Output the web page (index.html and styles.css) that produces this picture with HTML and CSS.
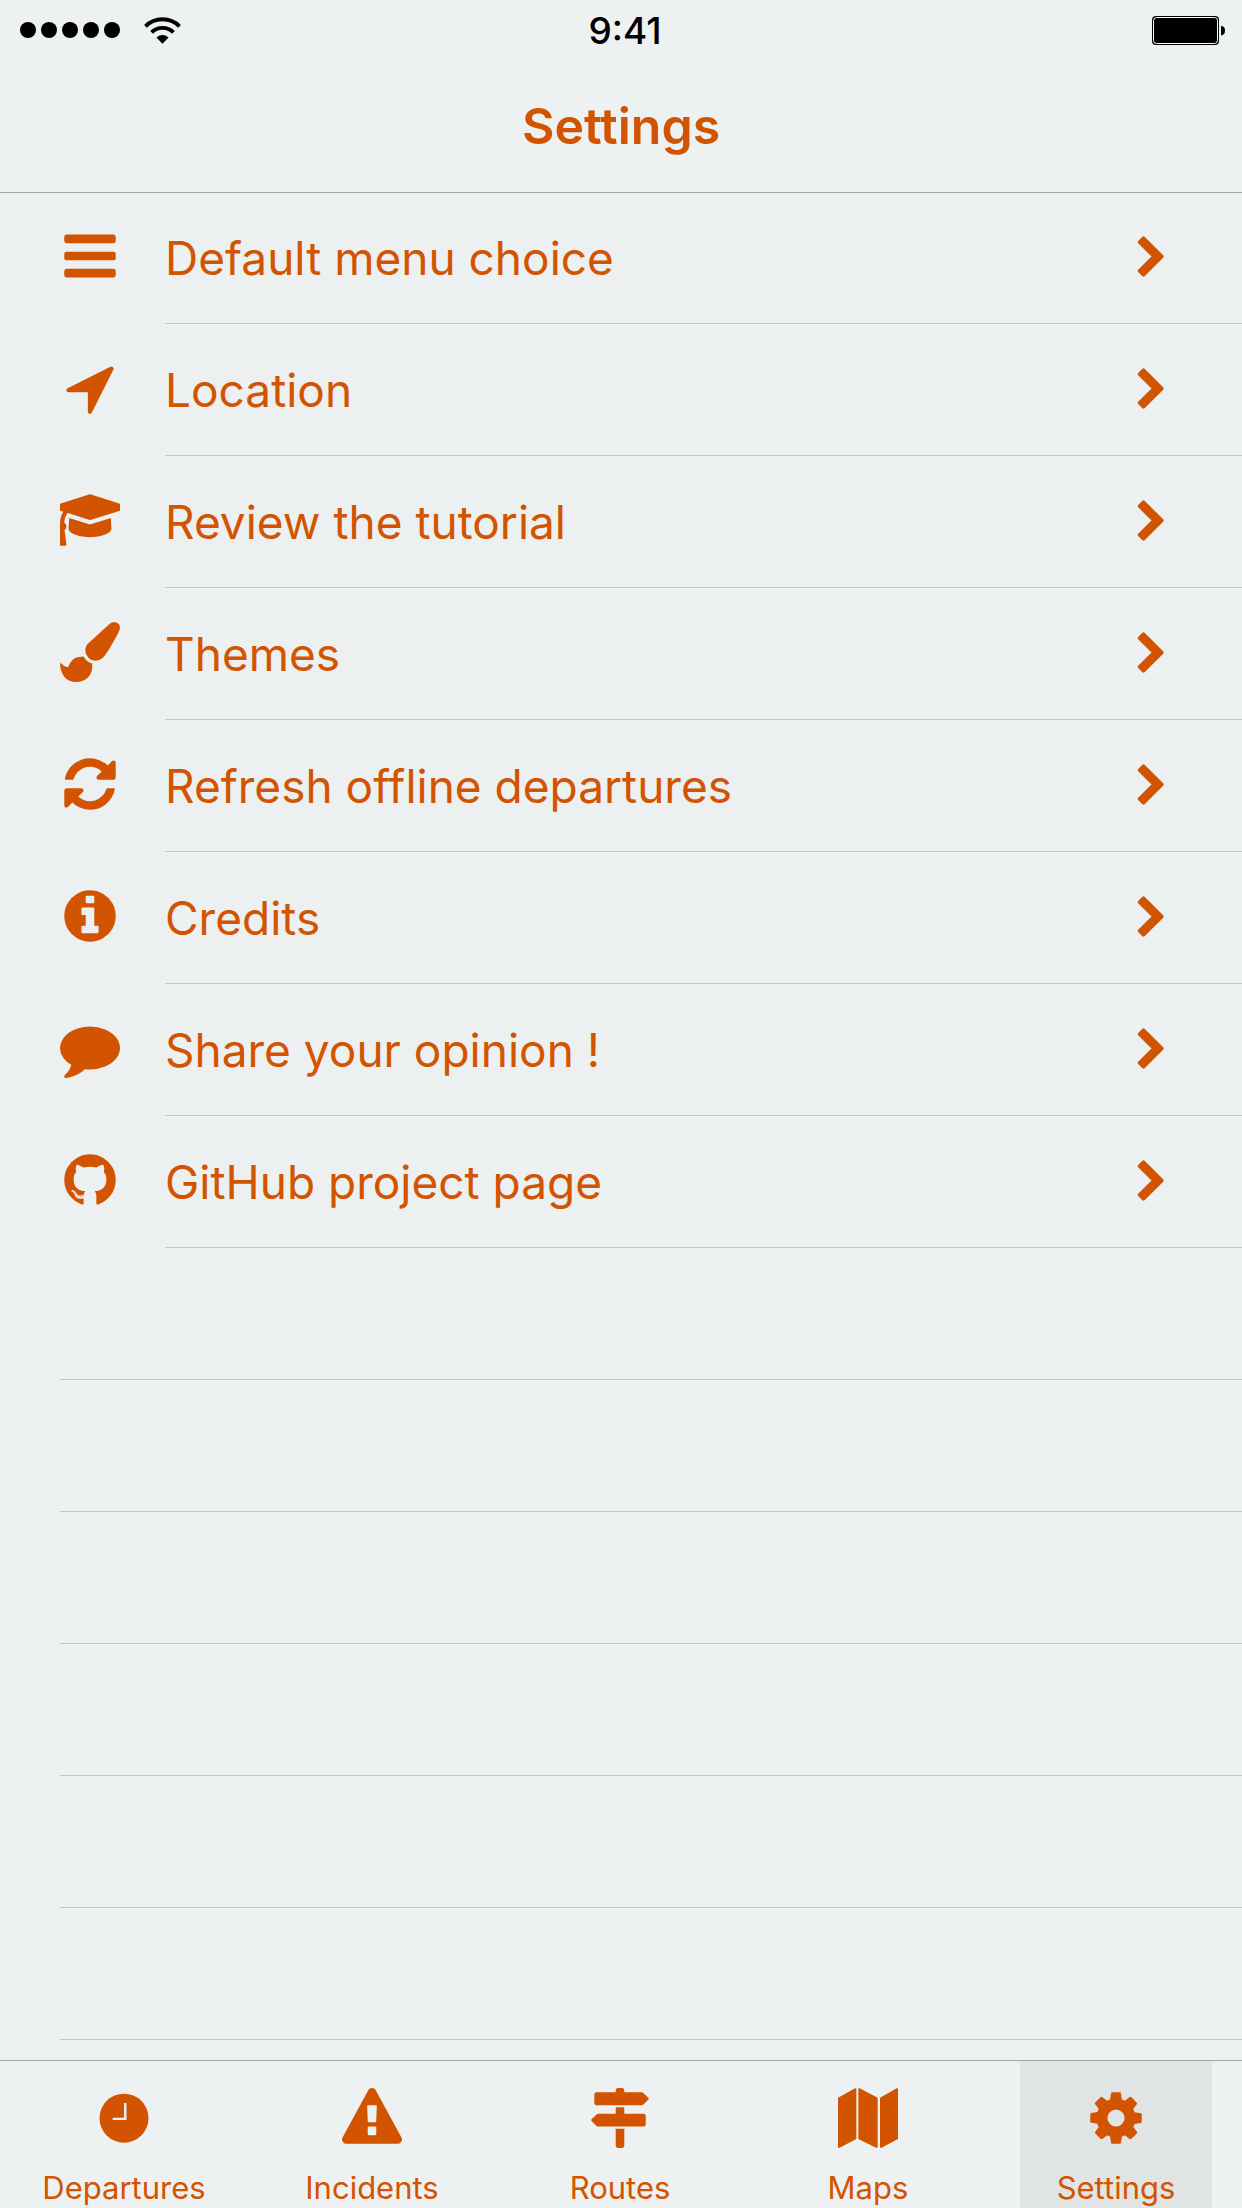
FILE: index.html
```html
<!DOCTYPE html>
<html lang="en">
<head>
<meta charset="utf-8">
<meta name="viewport" content="width=device-width, initial-scale=1">
<title>Settings</title>
<link rel="stylesheet" href="styles.css">
</head>
<body>
<svg class="sprite" aria-hidden="true">
  <symbol id="bars" viewBox="0 0 1792 1792"><path d="M1664 1344v128q0 26-19 45t-45 19h-1408q-26 0-45-19t-19-45v-128q0-26 19-45t45-19h1408q26 0 45 19t19 45zm0-512v128q0 26-19 45t-45 19h-1408q-26 0-45-19t-19-45v-128q0-26 19-45t45-19h1408q26 0 45 19t19 45zm0-512v128q0 26-19 45t-45 19h-1408q-26 0-45-19t-19-45v-128q0-26 19-45t45-19h1408q26 0 45 19t19 45z"/></symbol>
  <symbol id="location" viewBox="0 0 1792 1792"><path d="M1593 349l-640 1280q-17 35-57 35-5 0-15-2-22-5-35.5-22.500t-13.500-39.500v-576h-576q-22 0-39.500-13.500t-22.500-35.500 4-42 29-30l1280-640q13-7 29-7 27 0 45 19 15 14 18.500 34.500t-6.500 39.500z"/></symbol>
  <symbol id="graduation" viewBox="256 0 1792 1792"><path d="M1774 836l18 316q4 69-82 128t-235 93.500-323 34.500-323-34.500-235-93.500-82-128l18-316 574 181q22 7 48 7t48-7zm530-324q0 23-22 31l-1120 352q-4 1-10 1t-10-1l-652-206q-43 34-71 111.500t-34 178.500q63 36 63 109 0 69-58 107l58 433q2 14-8 25-9 11-24 11h-192q-15 0-24-11-10-11-8-25l58-433q-58-38-58-107 0-73 65-111 11-207 98-330l-333-104q-22-8-22-31t22-31l1120-352q4-1 10-1t10 1l1120 352q22 8 22 31z"/></symbol>
  <symbol id="brush" viewBox="0 0 1792 1792"><path d="M1615 0q70 0 122.500 46.500t52.500 116.500q0 63-45 151-332 629-465 752-97 91-218 91-126 0-216.500-92.500t-90.500-219.500q0-128 92-212l638-579q59-54 130-54zm-909 1034q39 76 106.500 130t150.500 76l1 71q4 213-129.500 347t-348.500 134q-123 0-218-46.500t-152.500-127.500-86.500-183-29-220q7 5 41 30t62 44.500 59 36.500 46 17q41 0 55-37 25-66 57.500-112.500t69.500-76 88-47.500 103-25.500 125-10.500z"/></symbol>
  <symbol id="refresh" viewBox="0 0 1792 1792"><path d="M1639 1056q0 5-1 7-64 268-268 434.500t-478 166.500q-146 0-282.500-55t-243.500-157l-129 129q-19 19-45 19t-45-19-19-45v-448q0-26 19-45t45-19h448q26 0 45 19t19 45-19 45l-137 137q71 66 161 102t187 36q134 0 250-65t186-179q11-17 53-117 8-23 30-23h192q13 0 22.500 9.500t9.500 22.500zm25-800v448q0 26-19 45t-45 19h-448q-26 0-45-19t-19-45 19-45l138-138q-148-137-349-137-134 0-250 65t-186 179q-11 17-53 117-8 23-30 23h-199q-13 0-22.500-9.500t-9.500-22.500v-7q65-268 270-434.500t480-166.500q146 0 284 55.500t245 156.500l130-129q19-19 45-19t45 19 19 45z"/></symbol>
  <symbol id="info" viewBox="0 0 1792 1792"><path d="M1152 1376v-160q0-14-9-23t-23-9h-96v-512q0-14-9-23t-23-9h-320q-14 0-23 9t-9 23v160q0 14 9 23t23 9h96v320h-96q-14 0-23 9t-9 23v160q0 14 9 23t23 9h448q14 0 23-9t9-23zm-128-896v-160q0-14-9-23t-23-9h-192q-14 0-23 9t-9 23v160q0 14 9 23t23 9h192q14 0 23-9t9-23zm640 416q0 209-103 385.500t-279.500 279.500-385.500 103-385.500-103-279.500-279.500-103-385.500 103-385.500 279.500-279.500 385.500-103 385.500 103 279.500 279.500 103 385.500z"/></symbol>
  <symbol id="comment" viewBox="0 0 1792 1792"><path d="M1792 896q0 174-120 321.500t-326 233-450 85.500q-70 0-145-8-198 175-460 242-49 14-114 22-17 2-30.500-9t-17.500-29v-1q-3-4-.5-12t2-10 4.500-9.500l6-9 7-8.500 8-9q7-8 31-34.500t34.500-38 31-39.500 32.500-51 27-59 26-76q-157-89-247.500-220t-90.500-281q0-130 71-248.500t191-204.500 286-136.500 348-50.500q244 0 450 85.500t326 233 120 321.500z"/></symbol>
  <symbol id="github" viewBox="0 0 1792 1792"><path d="M896 128q209 0 385.500 103t279.500 279.500 103 385.500q0 251-146.500 451.500t-378.500 277.500q-27 5-40-7t-13-30q0-3 .5-76.500t.5-134.500q0-97-52-142 57-6 102.500-18t94-39 81-66.500 53-105 20.500-150.500q0-119-79-206 37-91-8-204-28-9-81 11t-92 44l-38 24q-93-26-192-26t-192 26q-16-11-42.500-27t-83.500-38.500-85-13.500q-45 113-8 204-79 87-79 206 0 85 20.500 150t52.500 105 80.500 67 94 39 102.500 18q-39 36-49 103-21 10-45 15t-57 5-65.500-21.500-55.500-62.500q-19-32-48.500-52t-49.500-24l-20-3q-21 0-29 4.500t-5 11.500 9 14 13 12l7 5q22 10 43.500 38t31.500 51l10 23q13 38 44 61.500t67 30 69.500 7 55.500-3.500l23-4q0 38 .5 88.500t.5 54.500q0 18-13 30t-40 7q-232-77-378.500-277.500t-146.500-451.500q0-209 103-385.500t279.500-279.500 385.500-103zm-477 1103q3-7-7-12-10-3-13 2-3 7 7 12 9 6 13-2zm31 34q7-5-2-16-10-9-16-3-7 5 2 16 10 10 16 3zm30 45q9-7 0-19-8-13-17-6-9 5 0 18t17 7zm42 42q8-8-4-19-12-12-20-3-9 8 4 19 12 12 20 3zm57 25q3-11-13-16-15-4-19 7t13 15q15 6 19-6zm63 5q0-13-17-11-16 0-16 11 0 13 17 11 16 0 16-11zm58-10q-2-11-18-9-16 3-14 15t18 8 14-14z"/></symbol>
  <symbol id="chevron" viewBox="0 0 1792 1792"><path d="M1363 941l-742 742q-19 19-45 19t-45-19l-166-166q-19-19-19-45t19-45l531-531-531-531q-19-19-19-45t19-45l166-166q19-19 45-19t45 19l742 742q19 19 19 45t-19 45z"/></symbol>
  <symbol id="warning" viewBox="0 0 1792 1792"><path d="M1024 1375v-190q0-14-9.500-23.500t-22.500-9.500h-192q-13 0-22.500 9.500t-9.500 23.500v190q0 14 9.500 23.500t22.500 9.500h192q13 0 22.500-9.500t9.500-23.500zm-2-374l18-459q0-12-10-19-13-11-24-11h-220q-11 0-24 11-10 7-10 21l17 457q0 10 10 16.500t24 6.500h185q14 0 23.500-6.500t10.500-16.500zm-14-934l768 1408q35 63-2 126-17 29-46.500 46t-63.500 17h-1536q-34 0-63.500-17t-46.500-46q-37-63-2-126l768-1408q17-31 47-49t65-18 65 18 47 49z"/></symbol>
  <symbol id="signs" viewBox="0 0 1792 1792"><path d="M1745 297q10 10 10 23t-10 23l-141 141q-28 28-68 28h-1344q-26 0-45-19t-19-45v-256q0-26 19-45t45-19h576v-64q0-26 19-45t45-19h128q26 0 45 19t19 45v64h512q40 0 68 28zm-977 919h256v512q0 26-19 45t-45 19h-128q-26 0-45-19t-19-45v-512zm832-448q26 0 45 19t19 45v256q0 26-19 45t-45 19h-1344q-40 0-68-28l-141-141q-10-10-10-23t10-23l141-141q28-28 68-28h512v-192h256v192h576z"/></symbol>
  <symbol id="map" viewBox="0 0 180 180"><path d="M0 29L51 1q4-1 4 3V153L5 179.500Q0 180 0 178ZM61 4q0-4 4-3L119 29V176q0 5-5 3L61 153ZM126 29L176 1q4-1 4 2V153L131 179.500Q126 180 126 177Z"/></symbol>
  <symbol id="clock" viewBox="0 0 180 180"><path fill-rule="evenodd" d="M90 17a73.500 73.500 0 1 1 0 147a73.500 73.500 0 1 1 0-147zM90 45V89H56v7H97.500V45z"/></symbol>
  <symbol id="cog" viewBox="0 0 1792 1792"><path d="M1152 896q0-106-75-181t-181-75-181 75-75 181 75 181 181 75 181-75 75-181zm512-109v222q0 12-8 23t-20 13l-185 28q-19 54-39 91 35 50 107 138 10 12 10 25t-9 23q-27 37-99 108t-94 71q-12 0-26-9l-138-108q-44 23-91 38-16 136-29 186-7 28-36 28h-222q-14 0-24.500-8.500t-11.500-21.500l-28-184q-49-16-90-37l-141 107q-10 9-25 9-14 0-25-11-126-114-165-168-7-10-7-23 0-12 8-23 15-21 51-66.500t54-70.500q-27-50-41-99l-183-27q-13-2-21-12.500t-8-23.500v-222q0-12 8-23t19-13l186-28q14-46 39-92-40-57-107-138-10-12-10-24 0-10 9-23 26-36 98.500-107.500t94.500-71.500q13 0 26 10l138 107q44-23 91-38 16-136 29-186 7-28 36-28h222q14 0 24.500 8.500t11.500 21.500l28 184q49 16 90 37l142-107q9-9 24-9 13 0 25 10 129 119 165 170 7 8 7 22 0 12-8 23-15 21-51 66.500t-54 70.500q26 50 41 98l183 28q13 2 21 12.500t8 23.500z"/></symbol>
</svg>

<div class="screen">
  <header class="header">
    <div class="status">
      <div class="status-left">
        <div class="signal"><i></i><i></i><i></i><i></i><i></i></div>
        <svg class="wifi" viewBox="0 0 111 82" aria-hidden="true">
          <path class="wifi-arc" d="M3.900 28.400A73 73 0 0 1 107.100 28.400M22.300 46.800A47 47 0 0 1 88.700 46.800"/>
          <path d="M55.500 81L37 62Q55.500 47 74 62Z"/>
        </svg>
      </div>
      <time class="clock">9:41</time>
      <div class="status-right">
        <svg class="battery" viewBox="0 0 74 29" aria-hidden="true">
          <rect width="67" height="29" rx="4"/>
          <rect class="battery-gap" x="1.500" y="1.500" width="64" height="26" rx="3"/>
          <path d="M69 10q4 0 4 4.500T69 19.500z"/>
        </svg>
      </div>
    </div>
    <h1 class="title">Settings</h1>
  </header>

  <main class="content">
    <ul class="list">
      <li><a class="row" href="#menu"><svg class="icon"><use href="#bars"/></svg><span class="label">Default menu choice</span><svg class="chevron"><use href="#chevron"/></svg></a></li>
      <li><a class="row" href="#location-settings"><svg class="icon"><use href="#location"/></svg><span class="label">Location</span><svg class="chevron"><use href="#chevron"/></svg></a></li>
      <li><a class="row" href="#tutorial"><svg class="icon"><use href="#graduation"/></svg><span class="label">Review the tutorial</span><svg class="chevron"><use href="#chevron"/></svg></a></li>
      <li><a class="row" href="#themes"><svg class="icon"><use href="#brush"/></svg><span class="label">Themes</span><svg class="chevron"><use href="#chevron"/></svg></a></li>
      <li><a class="row" href="#offline"><svg class="icon"><use href="#refresh"/></svg><span class="label">Refresh offline departures</span><svg class="chevron"><use href="#chevron"/></svg></a></li>
      <li><a class="row" href="#credits"><svg class="icon"><use href="#info"/></svg><span class="label">Credits</span><svg class="chevron"><use href="#chevron"/></svg></a></li>
      <li><a class="row" href="#opinion"><svg class="icon"><use href="#comment"/></svg><span class="label">Share your opinion !</span><svg class="chevron"><use href="#chevron"/></svg></a></li>
      <li><a class="row" href="#project"><svg class="icon"><use href="#github"/></svg><span class="label">GitHub project page</span><svg class="chevron"><use href="#chevron"/></svg></a></li>
    </ul>
    <div class="blank-rows" aria-hidden="true">
      <div class="blank"></div><div class="blank"></div><div class="blank"></div>
      <div class="blank"></div><div class="blank"></div><div class="blank"></div>
    </div>
  </main>

  <nav class="tabs">
    <a class="tab" href="#departures"><svg class="icon"><use href="#clock"/></svg>Departures</a>
    <a class="tab" href="#incidents"><svg class="icon"><use href="#warning"/></svg>Incidents</a>
    <a class="tab" href="#routes"><svg class="icon"><use href="#signs"/></svg>Routes</a>
    <a class="tab" href="#maps"><svg class="icon"><use href="#map"/></svg>Maps</a>
    <a class="tab tab-active" href="#settings" aria-current="page"><svg class="icon"><use href="#cog"/></svg>Settings</a>
  </nav>
</div>
</body>
</html>
```

FILE: styles.css
```css
* {
  box-sizing: border-box;
}

body {
  margin: 0;
  background: #ecf0f1;
  color: #d35400;
  font-family: Inter, "Liberation Sans", sans-serif;
}

a {
  color: inherit;
  text-decoration: none;
}

svg {
  display: block;
  fill: currentColor;
}

.sprite {
  display: none;
}

.screen {
  display: flex;
  flex-direction: column;
  min-height: 100vh;
}

.header {
  position: relative;
  height: 192px;
  background: #edf1f2;
  box-shadow: 0 1px #a2a7a8;
}

.status {
  display: grid;
  grid-template-columns: 1fr auto 1fr;
  align-items: center;
  height: 60px;
  padding: 0 8px 0 16px;
  color: #000;
}

.status-left {
  display: flex;
  align-items: center;
  gap: 24px;
  padding-left: 4px;
}

.signal {
  display: flex;
  gap: 5px;
}

.signal i {
  width: 16px;
  height: 16px;
  border-radius: 50%;
  background: #000;
}

.wifi {
  width: 37px;
  height: 27px;
}

.wifi-arc {
  fill: none;
  stroke: #000;
  stroke-width: 12;
}

.clock {
  padding-top: 2px;
  font-size: 37px;
  font-weight: 500;
  line-height: 58px;
}

.status-right {
  display: flex;
  justify-content: flex-end;
  padding-right: 8px;
}

.battery {
  width: 74px;
  height: 29px;
}

.battery-gap {
  fill: #000;
  stroke: #fff;
}

.title {
  margin: 0;
  font-size: 50px;
  font-weight: 600;
  line-height: 132px;
  text-align: center;
}

.content {
  flex: 1;
}

.list {
  margin: 0;
  padding: 0;
  list-style: none;
}

.row {
  display: grid;
  grid-template-columns: 60px 1fr auto;
  column-gap: 45px;
  align-items: center;
  height: 132px;
  padding: 0 68px 0 60px;
  background: linear-gradient(#c2c7c9, #c2c7c9) 165px 100% / 100% 1px no-repeat;
}

.icon {
  width: 60px;
  height: 60px;
}

.row .icon {
  margin-bottom: 4px;
}

.label {
  font-size: 46px;
  line-height: 60px;
}

.chevron {
  width: 45px;
  height: 45px;
  margin-bottom: 3px;
}

.blank {
  height: 132px;
  margin-left: 60px;
  border-bottom: 1px solid #c2c7c9;
}

.tabs {
  display: grid;
  grid-template-columns: repeat(5, 1fr);
  justify-items: center;
  height: 148px;
  padding-right: 2px;
  border-top: 1px solid #a2a7a8;
  background: #edf1f2;
}

.tab {
  display: flex;
  flex-direction: column;
  align-items: center;
  gap: 20px;
  width: 192px;
  padding-top: 27px;
  font-size: 31px;
  line-height: 40px;
}

.tab-active {
  background: #e0e4e5;
}
```
